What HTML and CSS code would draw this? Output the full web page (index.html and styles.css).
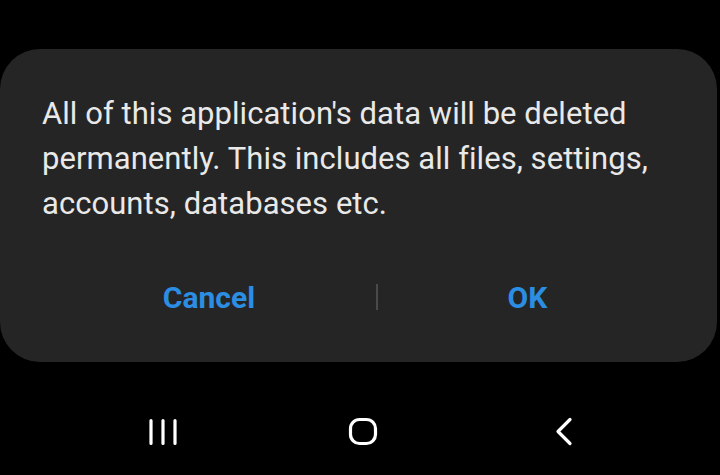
FILE: index.html
```html
<!DOCTYPE html>
<html>
<head>
<meta charset="utf-8">
<link rel="stylesheet" href="styles.css">
</head>
<body>
<div class="screen">
  <div class="dialog">
    <p class="message">All of this application's data will be deleted permanently. This includes all files, settings, accounts, databases etc.</p>
    <div class="actions">
      <button class="btn btn-cancel">Cancel</button>
      <span class="divider"></span>
      <button class="btn btn-ok">OK</button>
    </div>
  </div>
  <nav class="navbar">
    <svg class="nav-icon" width="40" height="40" viewBox="0 0 40 40">
      <path d="M8 8.5v23M20 8.5v23M32 8.5v23" stroke="#fff" stroke-width="3.2" stroke-linecap="round" fill="none"/>
    </svg>
    <svg class="nav-icon" width="40" height="40" viewBox="0 0 40 40">
      <rect x="7.5" y="7.5" width="25" height="24" rx="9" stroke="#fff" stroke-width="3.2" fill="none"/>
    </svg>
    <svg class="nav-icon" width="40" height="40" viewBox="0 0 40 40">
      <path d="M27 7.5L15 19.5l12 12" stroke="#fff" stroke-width="3.2" stroke-linecap="round" stroke-linejoin="round" fill="none"/>
    </svg>
  </nav>
</div>
</body>
</html>
```

FILE: styles.css
```css
html, body {
  margin: 0;
  padding: 0;
  background: #000;
}
.screen {
  width: 720px;
  height: 475px;
  background: #000;
  display: flex;
  flex-direction: column;
  padding-top: 49px;
  box-sizing: border-box;
  font-family: Roboto, "Noto Sans", sans-serif;
}
.dialog {
  width: 717px;
  height: 313px;
  background: #252525;
  border-radius: 40px;
  box-sizing: border-box;
  padding: 42px 40px 0 42px;
  display: flex;
  flex-direction: column;
}
.message {
  margin: 0;
  color: #e9e9e9;
  font-size: 31px;
  line-height: 45px;
  letter-spacing: 0.05px;
}
.actions {
  display: flex;
  align-items: center;
  margin-top: 51px;
}
.btn {
  background: none;
  border: none;
  color: #2c8ee2;
  font-family: Roboto, "Noto Sans", sans-serif;
  font-size: 30px;
  font-weight: bold;
  padding: 0;
  height: 40px;
}
.btn-cancel {
  width: 334px;
}
.btn-ok {
  flex: 1;
}
.divider {
  width: 2px;
  height: 26px;
  background: #4a4a4a;
}
.navbar {
  display: flex;
  gap: 160px;
  padding-left: 143px;
  margin-top: 50px;
}
.nav-icon {
  display: block;
}
```
